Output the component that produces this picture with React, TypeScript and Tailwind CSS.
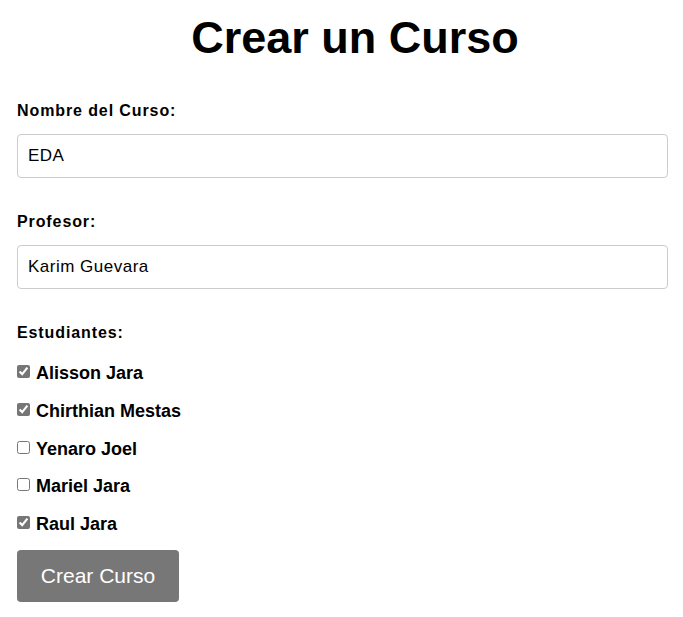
export default function App() {
  const students = [
    { name: "Alisson Jara", checked: true },
    { name: "Chirthian Mestas", checked: true },
    { name: "Yenaro Joel", checked: false },
    { name: "Mariel Jara", checked: false },
    { name: "Raul Jara", checked: true },
  ];

  return (
    <div className="min-h-[617px] bg-white text-black font-['Liberation_Sans',Arial,sans-serif] pl-[17px] pr-[15px]">
      <h1 className="pt-[12px] pl-[25px] text-center text-[45px] leading-[52px] font-bold">Crear un Curso</h1>

      <form className="flex flex-col" onSubmit={(e) => e.preventDefault()}>
        {/* Nombre */}
        <label className="mt-[37px] text-[16px] leading-[20px] font-bold tracking-[0.9px]">Nombre del Curso:</label>
        <input
          type="text"
          defaultValue="EDA"
          className="mt-[13px] h-[44px] w-full rounded-[4px] border border-[#cccccc] px-[10px] text-[17px] tracking-[0.5px] outline-none"
        />

        {/* Profesor */}
        <label className="mt-[34px] text-[16px] leading-[20px] font-bold tracking-[0.9px]">Profesor:</label>
        <input
          type="text"
          defaultValue="Karim Guevara"
          className="mt-[13px] h-[44px] w-full rounded-[4px] border border-[#cccccc] px-[10px] text-[17px] tracking-[0.5px] outline-none"
        />

        {/* Estudiantes */}
        <label className="mt-[34px] text-[16px] leading-[20px] font-bold tracking-[0.9px]">Estudiantes:</label>
        <div className="mt-[18px] flex flex-col gap-[16.75px]">
          {students.map((s) => (
            <label key={s.name} className="flex items-start h-[21px] text-[18px] leading-[21px] font-bold">
              <input
                type="checkbox"
                defaultChecked={s.checked}
                className="m-0 mt-[4px] h-[13px] w-[13px] accent-[#767676]"
              />
              <span className="ml-[6px] mt-[2px]">{s.name}</span>
            </label>
          ))}
        </div>

        <div className="mt-[17px]">
          <button
            type="submit"
            className="h-[52px] w-[162px] rounded-[4px] bg-[#777777] text-[21px] text-white"
          >
            Crear Curso
          </button>
        </div>
      </form>
    </div>
  );
}
